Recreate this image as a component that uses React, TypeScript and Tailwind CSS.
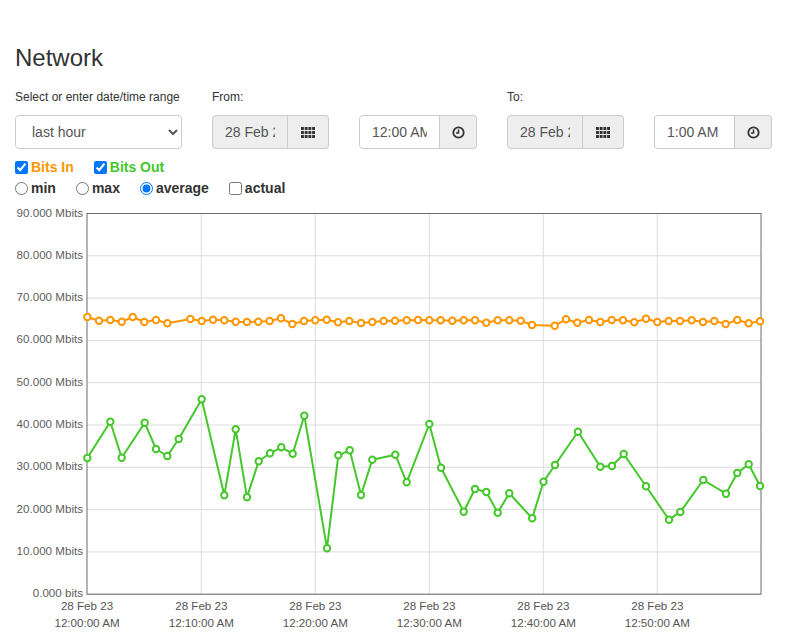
import React from "react";

const ORANGE = "#ff9500";
const GREEN = "#44c72a";

const bitsIn: [number, number][] = [
  [87.3, 317], [99, 320.7], [110.3, 320], [121.7, 321.7], [132.7, 317], [144.3, 322],
  [156, 320], [167.3, 323.3], [190.3, 319], [201.7, 321], [213, 319.7], [224.3, 320.3],
  [235.7, 321.7], [247, 322], [258.3, 321.7], [269.7, 321], [281, 318.3], [292.3, 324],
  [304, 321], [315.3, 320.3], [326.7, 319.7], [338, 322.3], [349.3, 321], [361, 323],
  [372.3, 322], [383.7, 321], [395, 320.7], [406.7, 320.3], [418, 320], [429.3, 320.3],
  [440.7, 320.3], [452.3, 320.7], [463.7, 320.3], [475, 320.3], [486.3, 322.7], [497.7, 320.3],
  [509.3, 320.3], [520.7, 320.7], [532, 325], [554.7, 325.7], [566, 319.3], [577.3, 322.7],
  [589, 320], [600.3, 322], [611.7, 320], [623, 320.3], [634.3, 322.3], [646, 318.7],
  [657.3, 322], [668.7, 321], [680, 321], [691.7, 320.3], [703, 322], [714.3, 321],
  [725.7, 324], [737.3, 320], [748.7, 323.3], [760, 321.3],
];

const bitsOut: [number, number][] = [
  [87.3, 458], [110.3, 421.7], [121.7, 457.7], [144.7, 422.7], [156, 449], [167.3, 456],
  [178.7, 439], [201.7, 399.3], [224.3, 495.3], [235.7, 429.3], [247, 497.3], [258.7, 461.3],
  [270, 453.3], [281.3, 447.3], [292.7, 453.7], [304.3, 415.7], [327, 548.3], [338.3, 455.3],
  [349.7, 450.3], [361, 495], [372.3, 459.7], [395.3, 454.7], [406.7, 482.3], [429.3, 424],
  [441, 467.7], [463.7, 511.7], [475, 489], [486.3, 492], [497.7, 512.7], [509.3, 493.3],
  [532.2, 518.3], [543.5, 481.7], [555, 465], [578, 431.7], [600.3, 466.7], [612, 466],
  [623.7, 454], [646, 486.3], [669, 519.7], [680.3, 512], [703.3, 480], [726, 493.7],
  [737.3, 473], [748.7, 464.3], [760, 486],
];

const yTicks = ["90.000 Mbits", "80.000 Mbits", "70.000 Mbits", "60.000 Mbits", "50.000 Mbits",
  "40.000 Mbits", "30.000 Mbits", "20.000 Mbits", "10.000 Mbits", "0.000 bits"];

const xTicks = [
  { x: 87, t: "12:00:00 AM" },
  { x: 201.3, t: "12:10:00 AM" },
  { x: 315.3, t: "12:20:00 AM" },
  { x: 429.3, t: "12:30:00 AM" },
  { x: 543.3, t: "12:40:00 AM" },
  { x: 657.3, t: "12:50:00 AM" },
];

const TOP = 213.5;
const STEP = 42.3;

const GridIcon = () => (
  <svg width="14" height="11" viewBox="0 0 14 11" fill="#333">
    {[0, 1, 2].map((r) =>
      [0, 1, 2, 3].map((c) => (
        <rect key={`${r}-${c}`} x={c * 3.7} y={r * 4} width="2.9" height="3" />
      ))
    )}
  </svg>
);

const ClockIcon = () => (
  <svg width="13" height="13" viewBox="0 0 13 13" fill="none" stroke="#333">
    <circle cx="6.5" cy="6.5" r="5.2" strokeWidth="1.8" />
    <path d="M6.5 3.4V6.9H4" strokeWidth="1.5" />
  </svg>
);

const DateGroup = ({ value }: { value: string }) => (
  <div className="flex h-[34px]">
    <input
      readOnly
      value={value}
      className="w-[76px] h-full px-3 text-[14px] text-[#555] bg-[#eeeeee] border border-[#ccc] rounded-l-[4px] outline-none"
    />
    <div className="w-[41px] h-full flex items-center justify-center bg-[#eeeeee] border border-l-0 border-[#ccc] rounded-r-[4px]">
      <GridIcon />
    </div>
  </div>
);

const TimeGroup = ({ value }: { value: string }) => (
  <div className="flex h-[34px]">
    <input
      readOnly
      value={value}
      className="w-[81px] h-full px-3 text-[14px] text-[#555] bg-white border border-[#ccc] rounded-l-[4px] outline-none"
    />
    <div className="w-[37px] h-full flex items-center justify-center bg-[#eeeeee] border border-l-0 border-[#ccc] rounded-r-[4px]">
      <ClockIcon />
    </div>
  </div>
);

const Series = ({ pts, color }: { pts: [number, number][]; color: string }) => (
  <g>
    <polyline
      points={pts.map((p) => p.join(",")).join(" ")}
      fill="none"
      stroke={color}
      strokeWidth="2"
      strokeLinejoin="round"
    />
    {pts.map((p, i) => (
      <circle key={i} cx={p[0]} cy={p[1]} r="3.2" fill="white" stroke={color} strokeWidth="2" />
    ))}
  </g>
);

const App = () => {
  return (
    <div className="w-[787px] h-[634px] overflow-hidden bg-white text-[#333] font-['Liberation_Sans',Arial,sans-serif]">
      <div className="px-[15px] pt-[45px]">
        <h3 className="text-[24px] leading-[26px]">Network</h3>

        <div className="mt-[18px] flex gap-[30px]">
          <div className="w-[167px]">
            <div className="text-[12px] leading-[17px] mb-[9px]">Select or enter date/time range</div>
            <select className="w-full h-[34px] px-3 text-[14px] text-[#555] bg-white border border-[#ccc] rounded-[4px] outline-none">
              <option>last hour</option>
            </select>
          </div>
          <div className="w-[117px]">
            <div className="text-[12px] leading-[17px] mb-[9px]">From:</div>
            <DateGroup value="28 Feb 2023" />
          </div>
          <div className="w-[118px]">
            <div className="h-[17px] mb-[9px]" />
            <TimeGroup value="12:00 AM" />
          </div>
          <div className="w-[117px]">
            <div className="text-[12px] leading-[17px] mb-[9px]">To:</div>
            <DateGroup value="28 Feb 2023" />
          </div>
          <div className="w-[118px]">
            <div className="h-[17px] mb-[9px]" />
            <TimeGroup value="1:00 AM" />
          </div>
        </div>

        <div className="mt-[8px] h-[21px] flex items-center gap-[20px] text-[14px] font-bold">
          <label className="flex items-center gap-[3px]" style={{ color: ORANGE }}>
            <input type="checkbox" defaultChecked className="m-0 w-[13px] h-[13px]" />
            Bits In
          </label>
          <label className="flex items-center gap-[3px]" style={{ color: GREEN }}>
            <input type="checkbox" defaultChecked className="m-0 w-[13px] h-[13px]" />
            Bits Out
          </label>
        </div>
        <div className="h-[21px] flex items-center gap-[20px] text-[14px] font-bold text-[#333]">
          <label className="flex items-center gap-[3px]">
            <input type="radio" name="agg" className="m-0 w-[13px] h-[13px]" />
            min
          </label>
          <label className="flex items-center gap-[3px]">
            <input type="radio" name="agg" className="m-0 w-[13px] h-[13px]" />
            max
          </label>
          <label className="flex items-center gap-[3px]">
            <input type="radio" name="agg" defaultChecked className="m-0 w-[13px] h-[13px]" />
            average
          </label>
          <label className="flex items-center gap-[3px]">
            <input type="checkbox" className="m-0 w-[13px] h-[13px]" />
            actual
          </label>
        </div>
      </div>

      <svg width="787" height="434" viewBox="0 200 787 434" className="block mt-[1px]">
        {yTicks.map((_, i) => (
          <line key={i} x1="87" x2="761" y1={TOP + i * STEP} y2={TOP + i * STEP} stroke="#dcdcdc" strokeWidth="1" />
        ))}
        {xTicks.slice(1).map((t) => (
          <line key={t.x} x1={t.x} x2={t.x} y1={TOP} y2={TOP + 9 * STEP} stroke="#dcdcdc" strokeWidth="1" />
        ))}
        <rect x="87" y={TOP} width="674" height={9 * STEP} fill="none" stroke="#6b6b6b" strokeWidth="1" />

        {yTicks.map((t, i) => (
          <text
            key={t}
            x="83"
            y={TOP + i * STEP}
            textAnchor="end"
            dominantBaseline="middle"
            fontSize="11.6"
            fill="#5e5e5e"
            fontFamily="Liberation Sans, Arial, sans-serif"
          >
            {t}
          </text>
        ))}
        {xTicks.map((t) => (
          <g key={t.t} fontSize="11.6" fill="#555" fontFamily="Liberation Sans, Arial, sans-serif" textAnchor="middle">
            <text x={t.x} y="607" dominantBaseline="middle">28 Feb 23</text>
            <text x={t.x} y="624" dominantBaseline="middle">{t.t}</text>
          </g>
        ))}

        <Series pts={bitsIn} color={ORANGE} />
        <Series pts={bitsOut} color={GREEN} />
      </svg>
    </div>
  );
};

export default App;
